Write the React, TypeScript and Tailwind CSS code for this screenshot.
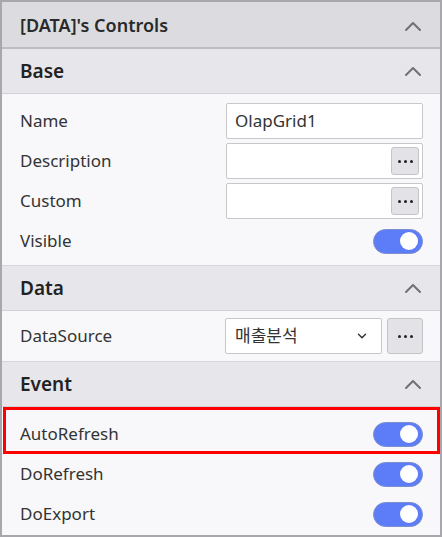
import { ChevronDown } from 'lucide-react';

const font = { fontFamily: '"Noto Sans", "Noto Sans CJK KR", sans-serif' };

function ChevronUp() {
  return (
    <svg width="18" height="12" viewBox="0 0 18 12" className="text-[#707075]">
      <polyline points="2,10 9,3 16,10" fill="none" stroke="currentColor" strokeWidth="2" strokeLinecap="round" strokeLinejoin="round" />
    </svg>
  );
}

function Dots() {
  return (
    <div className="flex items-center gap-[3px]">
      <span className="w-[3px] h-[3px] rounded-full bg-[#222]" />
      <span className="w-[3px] h-[3px] rounded-full bg-[#222]" />
      <span className="w-[3px] h-[3px] rounded-full bg-[#222]" />
    </div>
  );
}

function DotButton({ size = 'sm' }: { size?: 'sm' | 'lg' }) {
  return (
    <button
      className={`flex items-center justify-center rounded-[3px] border border-[#c4c4c8] bg-[#e3e3e7] ${
        size === 'lg' ? 'w-[36px] h-[36px]' : 'w-[28px] h-[28px]'
      }`}
    >
      <Dots />
    </button>
  );
}

function Toggle() {
  return (
    <div className="w-[50px] h-[25px] rounded-full bg-[#5c7cf8] border border-[#7d8fcf] flex items-center justify-end pr-[4px]">
      <span className="w-[18px] h-[18px] rounded-full bg-white" />
    </div>
  );
}

function SectionHeader({ title }: { title: string }) {
  return (
    <div className="h-[45px] shrink-0 bg-[#e6e6eb] border-b border-[#d2d2d6] flex items-center justify-between pl-[18px] pr-[18px]">
      <span className="text-[19px] font-semibold text-[#222]">{title}</span>
      <ChevronUp />
    </div>
  );
}

function Row({ label, children }: { label: string; children: React.ReactNode }) {
  return (
    <div className="h-[40px] flex items-center justify-between pl-[18px] pr-[17px]">
      <span className="text-[17px] text-[#333]">{label}</span>
      {children}
    </div>
  );
}

export default function App() {
  return (
    <div style={font} className="w-[442px] h-[537px] border-2 border-[#a8a8ac] bg-[#f8f8fa] flex flex-col overflow-hidden">
      {/* Panel header */}
      <div className="h-[47px] shrink-0 bg-[#dcdce0] border-b-2 border-[#bdbdc1] flex items-center justify-between pt-[2px] pl-[18px] pr-[18px]">
        <span className="text-[18px] font-semibold text-[#2a2a2a]">[DATA]'s Controls</span>
        <ChevronUp />
      </div>

      {/* Base */}
      <SectionHeader title="Base" />
      <div className="shrink-0 pt-[7px] pb-[4px] border-b border-[#d6d6da]">
        <Row label="Name">
          <div className="w-[197px] h-[36px] border border-[#c8c8cc] rounded-[2px] bg-white flex items-center px-[8px] text-[17px] text-[#333]">
            OlapGrid1
          </div>
        </Row>
        <Row label="Description">
          <div className="w-[197px] h-[36px] border border-[#c8c8cc] rounded-[2px] bg-white flex items-center justify-end pr-[3px]">
            <DotButton />
          </div>
        </Row>
        <Row label="Custom">
          <div className="w-[197px] h-[36px] border border-[#c8c8cc] rounded-[2px] bg-white flex items-center justify-end pr-[3px]">
            <DotButton />
          </div>
        </Row>
        <Row label="Visible">
          <Toggle />
        </Row>
      </div>

      {/* Data */}
      <SectionHeader title="Data" />
      <div className="h-[51px] shrink-0 flex items-center justify-between pl-[18px] pr-[17px] border-b border-[#d6d6da]">
        <span className="text-[17px] text-[#333]">DataSource</span>
        <div className="flex items-center gap-[5px]">
          <div className="w-[157px] h-[36px] border border-[#c8c8cc] rounded-[2px] bg-white flex items-center justify-between pl-[9px] pr-[12px]">
            <span className="text-[17px] text-[#333]">매출분석</span>
            <ChevronDown className="w-[14px] h-[14px] text-[#333]" strokeWidth={2.5} />
          </div>
          <DotButton size="lg" />
        </div>
      </div>

      {/* Event */}
      <SectionHeader title="Event" />
      <div className="relative flex-1 pt-[7px]">
        <div className="absolute left-[1px] right-0 top-0 h-[47px] border-[3px] border-[#ff0000] pointer-events-none" />
        <Row label="AutoRefresh">
          <Toggle />
        </Row>
        <Row label="DoRefresh">
          <Toggle />
        </Row>
        <Row label="DoExport">
          <Toggle />
        </Row>
      </div>
    </div>
  );
}
